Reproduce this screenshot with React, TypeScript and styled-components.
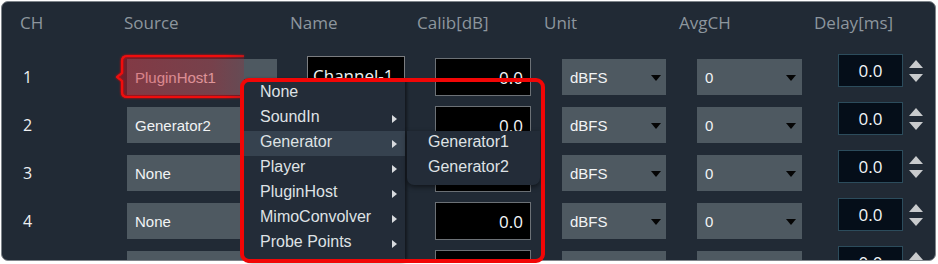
import React from "react";
import styled, { createGlobalStyle } from "styled-components";

const GlobalStyle = createGlobalStyle`
  html, body { margin: 0; padding: 0; background: #ffffff; }
  body { font-family: "Open Sans", "Liberation Sans", sans-serif; }
  * { box-sizing: border-box; }
`;

const Screen = styled.div`
  position: relative;
  width: 938px;
  height: 264px;
  overflow: hidden;
`;

const Panel = styled.div`
  margin: 1px 0 0 1px;
  width: 935px;
  height: 260px;
  border: 1px solid #7f858b;
  border-radius: 7px;
  background: #212a35;
  overflow: hidden;
`;

const COLS = "104px 166px 127px 127px 135px 135px 1fr";

const HeaderRow = styled.div`
  display: grid;
  grid-template-columns: ${COLS};
  padding-left: 18px;
  height: 42px;
  align-items: center;
`;

const HeaderCell = styled.div`
  font-family: "Open Sans", sans-serif;
  font-size: 17px;
  color: #8d969e;
  line-height: 42px;
`;

const Body = styled.div`
  display: flex;
  flex-direction: column;
  gap: 12px;
  padding-top: 14px;
`;

const Row = styled.div`
  display: grid;
  grid-template-columns: ${COLS};
  padding-left: 18px;
  height: 36px;
  align-items: center;
  flex-shrink: 0;
`;

const ChNum = styled.div`
  margin-left: 3px;
  font-family: "Open Sans", sans-serif;
  font-size: 16px;
  color: #eef0f2;
`;

const SourceCell = styled.div<{ $hl?: boolean }>`
  margin-left: 3px;
  width: 150px;
  height: 36px;
  background: #4e5961;
  display: flex;
  align-items: center;
  padding-left: 8px;
  font-family: "Liberation Sans", Arial, sans-serif;
  font-size: 15px;
  color: ${(p) => (p.$hl ? "#f8e0e0" : "#f2f4f5")};
`;

const NameBox = styled.div`
  margin-left: 17px;
  width: 98px;
  height: 40px;
  margin-top: -3px;
  background: #000;
  border: 1px solid #7b7d80;
  display: flex;
  align-items: center;
  padding-left: 5px;
  font-family: "Open Sans", sans-serif;
  font-size: 17px;
  color: #f4f4f4;
  white-space: nowrap;
  overflow: hidden;
`;

const CalibBox = styled.div`
  margin-left: 18px;
  width: 96px;
  height: 38px;
  background: #000;
  border: 1px solid #6c7176;
  display: flex;
  align-items: center;
  justify-content: flex-end;
  padding-right: 7px;
  font-family: "Open Sans", sans-serif;
  font-size: 17px;
  color: #f4f6f8;
`;

const Select = styled.div<{ $w: number; $arrowGap: number }>`
  margin-left: 18px;
  width: ${(p) => p.$w}px;
  height: 36px;
  background: #4e5961;
  display: flex;
  align-items: center;
  justify-content: space-between;
  padding-left: 8px;
  padding-right: ${(p) => p.$arrowGap}px;
  font-family: "Liberation Sans", Arial, sans-serif;
  font-size: 15px;
  color: #f2f4f5;
`;

const DownArrow = styled.span`
  width: 0;
  height: 0;
  border-left: 5px solid transparent;
  border-right: 5px solid transparent;
  border-top: 6px solid #050505;
  margin-top: 2px;
`;

const DelayGroup = styled.div`
  margin-left: 24px;
  display: flex;
  align-items: center;
  align-self: start;
  margin-top: -4px;
`;

const DelayBox = styled.div`
  width: 65px;
  height: 33px;
  background: #050e19;
  border: 1px solid #2c4c5c;
  display: flex;
  align-items: center;
  justify-content: center;
  font-family: "Open Sans", sans-serif;
  font-size: 17px;
  color: #f2f6f8;
`;

const Spinner = styled.div`
  margin-left: 6px;
  display: flex;
  flex-direction: column;
  gap: 6px;
`;

const Tri = styled.span<{ $up?: boolean }>`
  width: 0;
  height: 0;
  border-left: 7px solid transparent;
  border-right: 7px solid transparent;
  ${(p) =>
    p.$up
      ? "border-bottom: 8px solid #c9cbcd;"
      : "border-top: 8px solid #c9cbcd;"}
`;

/* ---------- annotation overlays ---------- */

const Callout = styled.svg`
  position: absolute;
  left: 113px;
  top: 52px;
  width: 134px;
  height: 50px;
  overflow: visible;
  pointer-events: none;
`;

const Menu = styled.div`
  position: absolute;
  left: 244px;
  top: 79px;
  width: 161px;
  height: 184px;
  padding-top: 2px;
  background: #232c38;
  box-shadow: 2px 0 3px rgba(0, 0, 0, 0.45);
  border-radius: 0 0 6px 6px;
`;

const MenuItem = styled.div<{ $active?: boolean }>`
  height: 25px;
  display: flex;
  align-items: center;
  justify-content: space-between;
  padding: 0 8px 3px 16px;
  font-family: "Liberation Sans", Arial, sans-serif;
  font-size: 16px;
  color: #dfe2e5;
  background: ${(p) => (p.$active ? "#36424f" : "transparent")};
`;

const SubArrow = styled.span`
  width: 0;
  height: 0;
  border-top: 4px solid transparent;
  border-bottom: 4px solid transparent;
  border-left: 5px solid #d8dbde;
  margin-top: 4px;
`;

const SubMenu = styled.div`
  position: absolute;
  left: 407px;
  top: 131px;
  width: 133px;
  padding-bottom: 4px;
  background: #232c38;
  border-radius: 0 0 7px 7px;
  box-shadow: 0 2px 5px rgba(0, 0, 0, 0.5);
`;

const SubItem = styled.div`
  height: 25px;
  display: flex;
  align-items: center;
  padding: 0 0 3px 21px;
  font-family: "Liberation Sans", Arial, sans-serif;
  font-size: 16px;
  color: #dfe2e5;
`;

const RedFrame = styled.div`
  position: absolute;
  left: 240px;
  top: 78px;
  width: 305px;
  height: 185px;
  border: 4px solid #f20606;
  border-radius: 9px;
  pointer-events: none;
`;

const rows = [
  { ch: "1", src: "PluginHost1", name: "Channel-1", hl: true },
  { ch: "2", src: "Generator2", name: "Channel-2" },
  { ch: "3", src: "None", name: "Channel-3" },
  { ch: "4", src: "None", name: "Channel-4" },
  { ch: "5", src: "None", name: "Channel-5" },
];

const headers = ["CH", "Source", "Name", "Calib[dB]", "Unit", "AvgCH", "Delay[ms]"];

const menuItems = [
  { label: "None", sub: false },
  { label: "SoundIn", sub: true },
  { label: "Generator", sub: true, active: true },
  { label: "Player", sub: true },
  { label: "PluginHost", sub: true },
  { label: "MimoConvolver", sub: true },
  { label: "Probe Points", sub: true },
];

export default function App() {
  return (
    <Screen>
      <GlobalStyle />
      <Panel>
        <HeaderRow>
          {headers.map((h) => (
            <HeaderCell key={h}>{h}</HeaderCell>
          ))}
        </HeaderRow>
        <Body>
          {rows.map((r) => (
            <Row key={r.ch}>
              <ChNum>{r.ch}</ChNum>
              <SourceCell $hl={r.hl}>{r.src}</SourceCell>
              <NameBox>{r.name}</NameBox>
              <CalibBox>0.0</CalibBox>
              <Select $w={104} $arrowGap={5}>
                dBFS
                <DownArrow />
              </Select>
              <Select $w={105} $arrowGap={6}>
                0
                <DownArrow />
              </Select>
              <DelayGroup>
                <DelayBox>0.0</DelayBox>
                <Spinner>
                  <Tri $up />
                  <Tri />
                </Spinner>
              </DelayGroup>
            </Row>
          ))}
        </Body>
      </Panel>

      <Callout viewBox="0 0 134 50">
        <defs>
          <linearGradient id="cg" x1="0" x2="1" y1="0" y2="0">
            <stop offset="0" stopColor="#b81a28" stopOpacity="0.5" />
            <stop offset="0.75" stopColor="#b81a28" stopOpacity="0.38" />
            <stop offset="1" stopColor="#b81a28" stopOpacity="0.22" />
          </linearGradient>
          <linearGradient id="sg" x1="0" x2="1" y1="0" y2="0">
            <stop offset="0" stopColor="#f01010" stopOpacity="1" />
            <stop offset="0.85" stopColor="#f01010" stopOpacity="1" />
            <stop offset="1" stopColor="#f01010" stopOpacity="0.6" />
          </linearGradient>
          <filter id="glow" x="-10%" y="-30%" width="120%" height="160%">
            <feGaussianBlur stdDeviation="1.2" result="b" />
            <feMerge>
              <feMergeNode in="b" />
              <feMergeNode in="SourceGraphic" />
            </feMerge>
          </filter>
        </defs>
        <path
          d="M131 4 H14 Q9 4 9 9 V21 L4 25 L9 29 V40 Q9 45 14 45 H131 Z"
          fill="url(#cg)"
          stroke="none"
        />
        <path
          d="M131 4 H14 Q9 4 9 9 V21 L4 25 L9 29 V40 Q9 45 14 45 H131"
          fill="none"
          stroke="url(#sg)"
          strokeWidth="2.2"
          strokeLinejoin="round"
          filter="url(#glow)"
        />
      </Callout>

      <Menu>
        {menuItems.map((m) => (
          <MenuItem key={m.label} $active={m.active}>
            {m.label}
            {m.sub && <SubArrow />}
          </MenuItem>
        ))}
      </Menu>
      <SubMenu>
        <SubItem>Generator1</SubItem>
        <SubItem>Generator2</SubItem>
      </SubMenu>
      <RedFrame />
    </Screen>
  );
}
